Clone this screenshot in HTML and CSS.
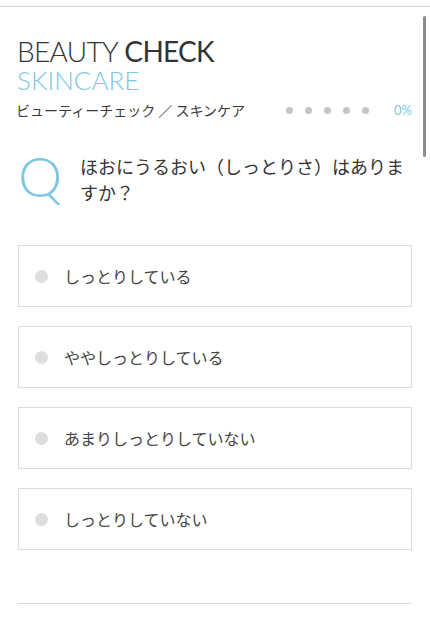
FILE: index.html
```html
<!DOCTYPE html>
<html lang="ja">
<head>
    <meta charset="UTF-8">
    <meta name="viewport" content="width=device-width, initial-scale=1.0">
    <title>BEAUTY CHECK SKINCARE</title>
    <link rel="stylesheet" href="styles.css">
</head>
<body>
    <div class="top-line"></div>
    <div class="scroll-indicator"></div>

    <div class="page">
        <div class="header">
            <h1 class="title"><span class="light">BEAUTY</span> CHECK</h1>
            <div class="subtitle">SKINCARE</div>
            <div class="progress-row">
                <span class="subtitle-jp">ビューティーチェック ／ スキンケア</span>
                <div class="progress">
                    <span class="dot"></span>
                    <span class="dot"></span>
                    <span class="dot"></span>
                    <span class="dot"></span>
                    <span class="dot"></span>
                    <span class="percent">0%</span>
                </div>
            </div>
        </div>

        <div class="question">
            <span class="q-mark">Q</span>
            <p class="question-text">ほおにうるおい（しっとりさ）はありますか？</p>
        </div>

        <div class="options">
            <div class="option"><span class="radio"></span>しっとりしている</div>
            <div class="option"><span class="radio"></span>ややしっとりしている</div>
            <div class="option"><span class="radio"></span>あまりしっとりしていない</div>
            <div class="option"><span class="radio"></span>しっとりしていない</div>
        </div>

        <div class="bottom-line"></div>
    </div>
</body>
</html>
```

FILE: styles.css
```css
body {
    margin: 0;
    background: #fff;
    color: #333;
    font-family: "Noto Sans CJK JP", "Noto Sans", sans-serif;
}

.top-line {
    height: 6px;
    border-bottom: 1px solid #d4d4d4;
}

.scroll-indicator {
    position: absolute;
    top: 16px;
    right: 4px;
    width: 3px;
    height: 141px;
    border-radius: 2px;
    background: #8c8c8c;
}

.page {
    padding: 0 18px;
}

.header {
    padding-top: 30px;
}

.title {
    margin: 0 0 0 -1px;
    font-family: Lato, sans-serif;
    font-weight: 400;
    font-size: 28px;
    line-height: 29px;
    color: #333;
    letter-spacing: -0.7px;
}

.title .light {
    font-weight: 300;
}

.subtitle {
    margin-left: -1px;
    font-family: Lato, sans-serif;
    font-weight: 300;
    font-size: 26px;
    line-height: 28px;
    color: #7ec7e2;
}

.progress-row {
    display: flex;
    align-items: center;
    justify-content: space-between;
    margin-top: 6px;
    height: 20px;
}

.subtitle-jp {
    font-size: 14px;
    color: #3a3a3a;
    margin-left: -2px;
}

.progress {
    display: flex;
    align-items: center;
    gap: 12px;
}

.dot {
    width: 7px;
    height: 7px;
    border-radius: 50%;
    background: #c4c4c4;
}

.percent {
    margin-left: 13px;
    font-family: Lato, sans-serif;
    font-size: 13px;
    color: #7ec7e2;
}

.question {
    display: flex;
    align-items: flex-start;
    margin-top: 33px;
}

.q-mark {
    width: 62px;
    flex-shrink: 0;
    font-family: Lato, sans-serif;
    font-weight: 300;
    font-size: 56px;
    line-height: 46px;
    color: #7ec7e2;
}

.question-text {
    margin: 0;
    font-size: 18px;
    line-height: 26px;
    color: #333;
}

.options {
    display: flex;
    flex-direction: column;
    gap: 19px;
    margin-top: 40px;
}

.option {
    display: flex;
    align-items: center;
    box-sizing: border-box;
    height: 62px;
    padding-left: 16px;
    border: 1px solid #dcdcdc;
    font-size: 16px;
    color: #444;
}

.radio {
    width: 13px;
    height: 13px;
    border-radius: 50%;
    background: #dedede;
    margin-right: 16px;
}

.bottom-line {
    margin-top: 53px;
    border-top: 1px solid #dcdcdc;
}
```
